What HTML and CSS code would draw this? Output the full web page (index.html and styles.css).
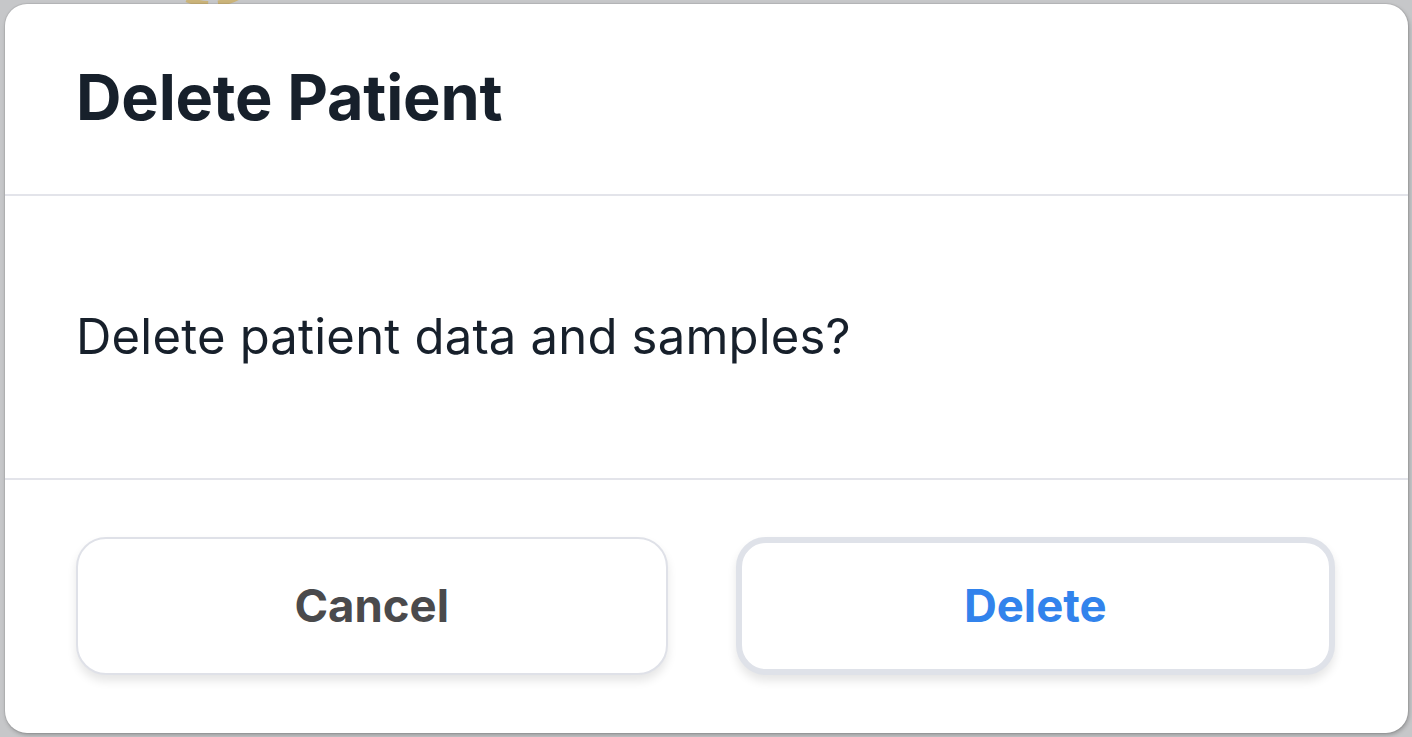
FILE: index.html
```html
<!DOCTYPE html>
<html lang="en">
<head>
<meta charset="utf-8">
<title>Delete Patient</title>
<link rel="stylesheet" href="styles.css">
</head>
<body>
<div class="backdrop">
  <svg class="bg-ring" width="140" height="70" viewBox="0 0 140 70"><circle cx="70" cy="4" r="60" fill="none" stroke="#cbb47a" stroke-width="6" stroke-dasharray="22 10"/></svg>
  <div class="modal">
    <header class="modal-header">
      <h1 class="modal-title">Delete Patient</h1>
    </header>
    <section class="modal-body">
      <p class="modal-text">Delete patient data and samples?</p>
    </section>
    <footer class="modal-footer">
      <button class="btn btn-cancel">Cancel</button>
      <button class="btn btn-delete">Delete</button>
    </footer>
  </div>
</div>
</body>
</html>
```

FILE: styles.css
```css
* { box-sizing: border-box; }
html, body { margin: 0; padding: 0; height: 100%; }
body {
  font-family: Inter, "Noto Sans", sans-serif;
  background: #c6c7c9;
  overflow: hidden;
}
.backdrop {
  position: relative;
  height: 100%;
  padding: 4px 4px 4px 5px;
  display: flex;
}
.bg-ring {
  position: absolute;
  left: 140px;
  top: -60px;
}
.modal {
  position: relative;
  flex: 1;
  background: #fff;
  border-radius: 22px;
  box-shadow: 0 0 0 1px rgba(0,0,0,0.06), 1px 2px 4px rgba(0,0,0,0.25);
  display: flex;
  flex-direction: column;
  overflow: hidden;
}
.modal-header {
  height: 192px;
  border-bottom: 2px solid #e3e4ea;
  display: flex;
  align-items: center;
  padding: 0 71px 4px;
}
.modal-title {
  margin: 0;
  font-size: 63px;
  font-weight: 700;
  color: #17202b;
  letter-spacing: -0.2px;
}
.modal-body {
  height: 284px;
  border-bottom: 2px solid #e3e4ea;
  display: flex;
  align-items: center;
  padding: 0 71px 2px;
}
.modal-text {
  margin: 0;
  font-size: 49px;
  font-weight: 400;
  color: #17202b;
  letter-spacing: 0.2px;
}
.modal-footer {
  flex: 1;
  display: flex;
  gap: 68px;
  align-items: center;
  padding: 0 73px 2px 71px;
}
.btn {
  flex: 1 1 0;
  margin: 0;
  height: 138px;
  border-radius: 30px;
  background: #fff;
  font-family: Inter, "Noto Sans", sans-serif;
  font-size: 45.5px;
  font-weight: 700;
  cursor: pointer;
  box-shadow: 0 6px 10px rgba(0,0,0,0.10);
}
.btn-cancel {
  border: 2px solid #dfe1e8;
  color: #4a4a4c;
}
.btn-delete {
  border: 6px solid #dfe2e9;
  color: #3283ec;
}
```
